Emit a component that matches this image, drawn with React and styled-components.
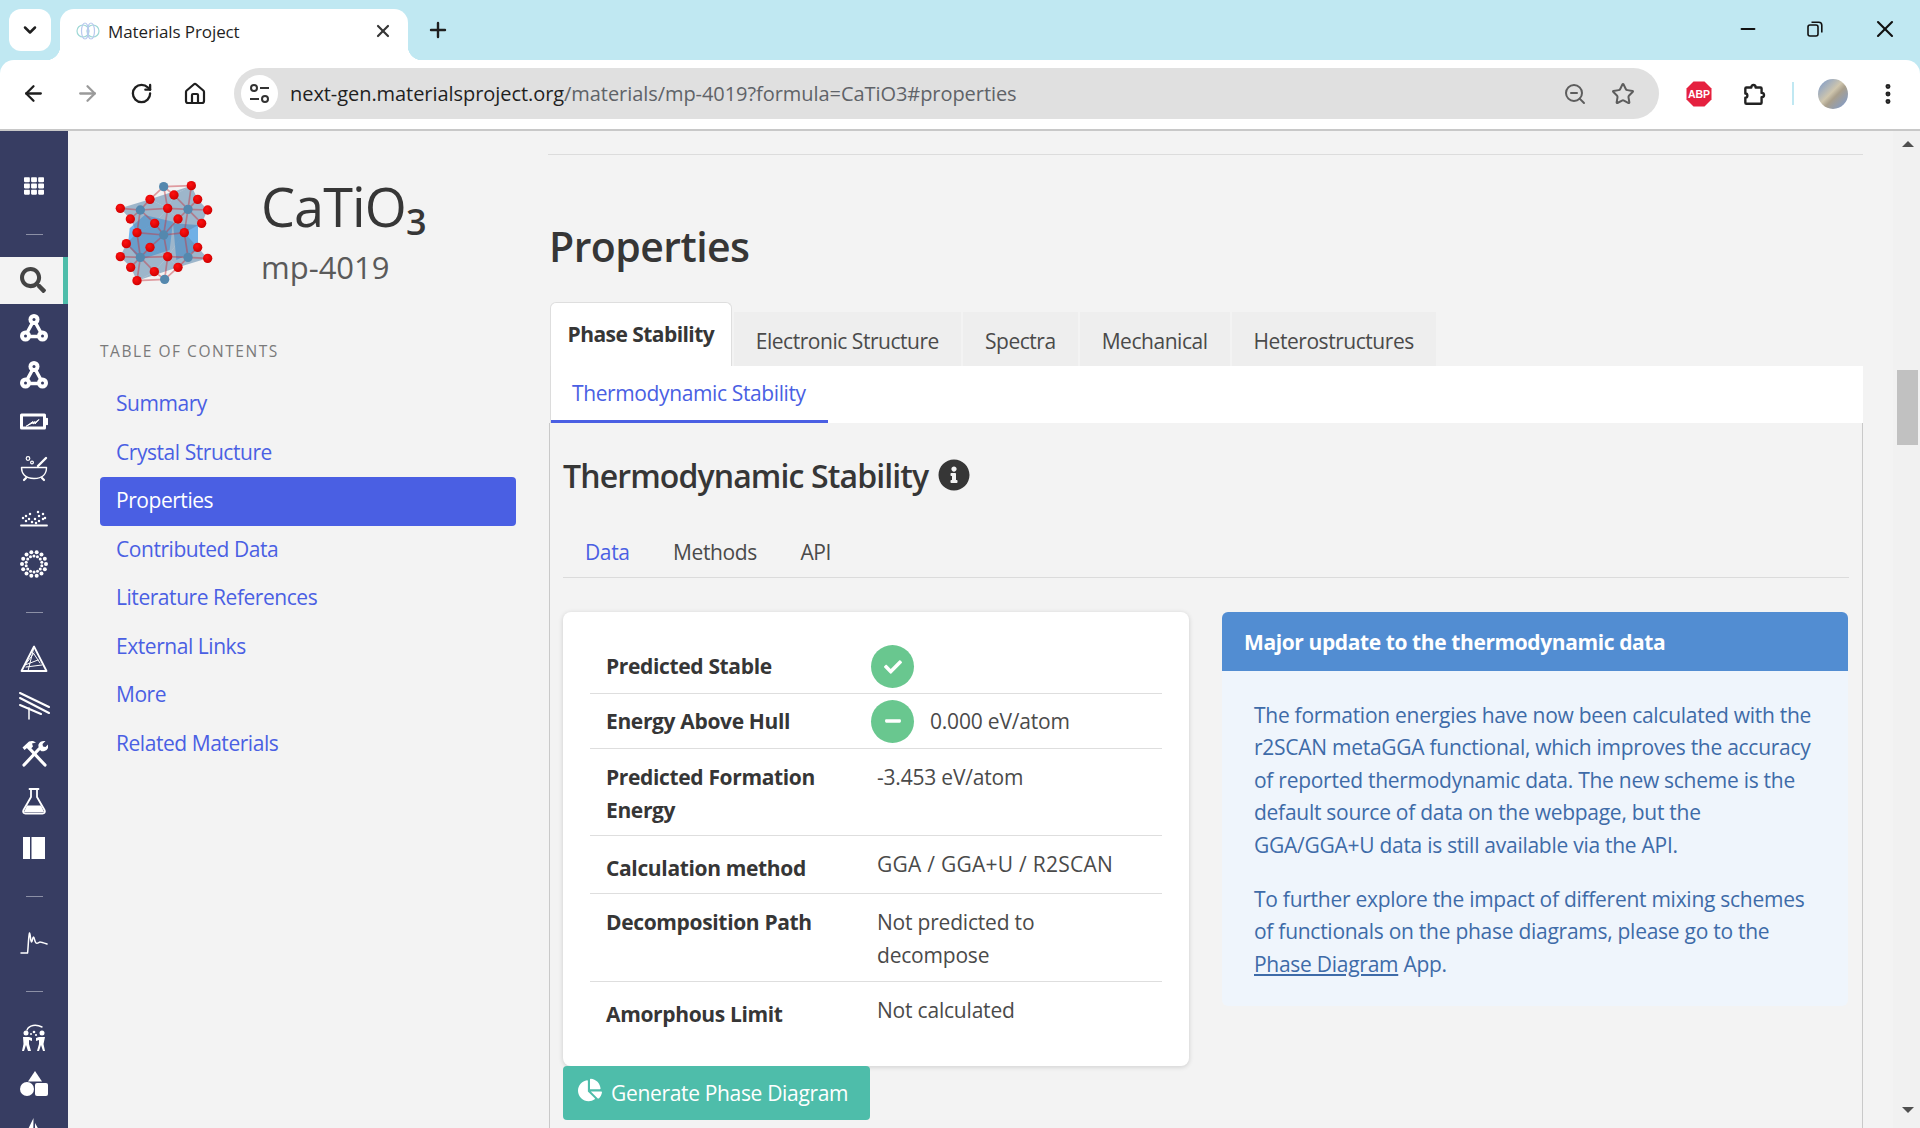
import React from 'react';
import styled, {createGlobalStyle} from 'styled-components';
import {ArrowLeft, ArrowRight, ChevronDown, EllipsisVertical, House, Minus, Plus, RotateCw, Star, X, ZoomOut} from 'lucide-react';
import {FaChartPie, FaCheck, FaInfoCircle, FaMinus, FaSearch, FaTh} from 'react-icons/fa';

const GlobalStyle = createGlobalStyle`
  html, body {
    margin: 0;
    height: 100%;
    overflow: hidden;
    background: #f3f3f3;
  }
  * {
    box-sizing: border-box;
  }
`;

const FONT = `'Open Sans', 'Noto Sans', sans-serif`;
const BLUE = '#4a5fe3';

const Page = styled.div`
  display: flex;
  flex-direction: column;
  width: 1920px;
  height: 1128px;
  overflow: hidden;
  font-family: ${FONT};
  color: #363636;
`;

/* browser chrome */
const Chrome = styled.header`
  flex-shrink: 0;
  background: #c0e8f2;
`;
const TabStrip = styled.div`
  display: flex;
  align-items: flex-start;
  height: 60px;
  padding: 9px 0 0 9px;
`;
const TabSearch = styled.div`
  display: flex;
  align-items: center;
  justify-content: center;
  width: 42px;
  height: 42px;
  margin-right: 9px;
  background: #fff;
  border-radius: 12px;
  color: #1f1f1f;
`;
const BrowserTab = styled.div`
  position: relative;
  display: flex;
  align-items: center;
  width: 348px;
  height: 51px;
  padding: 0 15px 7px 16px;
  background: #fff;
  border-radius: 14px 14px 0 0;

  &::before, &::after {
    content: '';
    position: absolute;
    bottom: 0;
    width: 14px;
    height: 14px;
  }
  &::before {
    left: -14px;
    background: radial-gradient(circle at 0 0, transparent 14px, #fff 14.5px);
  }
  &::after {
    right: -14px;
    background: radial-gradient(circle at 100% 0, transparent 14px, #fff 14.5px);
  }
`;
const TabTitle = styled.span`
  flex: 1;
  margin-left: 8px;
  font-size: 17px;
  letter-spacing: -.1px;
  color: #1f1f1f;
`;
const NewTab = styled.div`
  display: flex;
  align-items: center;
  justify-content: center;
  width: 30px;
  height: 42px;
  margin-left: 15px;
  color: #1f1f1f;
`;
const WindowControls = styled.div`
  display: flex;
  align-items: center;
  gap: 48px;
  height: 40px;
  margin-left: auto;
  padding-right: 21px;
  color: #111;
`;
const Toolbar = styled.div`
  display: flex;
  align-items: center;
  height: 71px;
  padding: 0 0 2px 20px;
  background: #fff;
  border-radius: 14px 14px 0 0;
  border-bottom: 2px solid #c8c8c8;
`;
const NavButton = styled.span`
  display: flex;
  justify-content: center;
  width: 26px;
  margin-right: 28px;
  color: ${props => props.$muted ? '#9a9a9a' : '#1f1f1f'};
`;
const AddressBar = styled.div`
  display: flex;
  align-items: center;
  flex-shrink: 0;
  width: 1425px;
  height: 51px;
  margin-left: -2px;
  padding: 0 24px 0 7px;
  background: #e0e0e0;
  border-radius: 26px;
  color: #5d5d5d;
`;
const SiteChip = styled.span`
  display: flex;
  align-items: center;
  justify-content: center;
  width: 37px;
  height: 37px;
  margin-right: 12px;
  background: #fff;
  border-radius: 50%;
  color: #333;
`;
const Url = styled.span`
  flex: 1;
  font-size: 20px;
  letter-spacing: -.06px;
  color: #5f6368;

  b {
    font-weight: 400;
    color: #1f1f1f;
  }
`;
const ToolIcons = styled.div`
  display: flex;
  align-items: center;
  margin-left: 27px;
`;
const ToolGap = styled.span`
  width: 29px;
`;
const AddressIcons = styled.div`
  display: flex;
  align-items: center;
  gap: 24px;
`;
const Divider = styled.span`
  width: 2px;
  height: 23px;
  margin: 0 24px 0 25px;
  background: #c0e8f2;
`;
const Avatar = styled.span`
  width: 30px;
  height: 30px;
  margin-right: 27px;
  border-radius: 50%;
  background: linear-gradient(135deg, #93a6c2 15%, #cfc6ae 45%, #a99f8c 58%, #8b9dbc 85%);
`;

/* page body */
const Body = styled.div`
  flex: 1;
  display: flex;
  min-height: 0;
`;
const SideNav = styled.nav`
  flex-shrink: 0;
  width: 68px;
  padding-top: 31px;
  background: #373d62;
  overflow: hidden;
  color: #fff;
`;
const NavItem = styled.div`
  display: flex;
  align-items: center;
  justify-content: center;
  height: 47.3px;
  padding-left: ${props => props.$active ? 3 : 0}px;
  background: ${props => props.$active ? '#f3f3f3' : 'transparent'};
  border-right: ${props => props.$active ? '5px solid #4ebdaa' : '0'};
  color: ${props => props.$active ? '#444' : '#fff'};
`;
const NavRule = styled.span`
  width: 17px;
  height: 1px;
  margin-top: 3px;
  background: #8c90a6;
`;

const Toc = styled.aside`
  flex-shrink: 0;
  width: 481px;
  padding: 49px 33px 0 32px;
`;
const MaterialHead = styled.div`
  display: flex;
  margin-left: 13px;
`;
const MaterialName = styled.div`
  margin: -9px 0 0 44px;
`;
const Formula = styled.h1`
  margin: 0;
  font-size: 54px;
  line-height: 70px;
  font-weight: 500;
  letter-spacing: -.9px;
  color: #363636;

  sub {
    font-size: 36px;
    font-weight: 600;
    line-height: 0;
    vertical-align: -8px;
  }
`;
const MaterialId = styled.div`
  margin-top: 4px;
  font-size: 31px;
  line-height: 44px;
  color: #5a5a5a;
`;
const TocLabel = styled.div`
  margin: 50px 0 17px;
  font-size: 15.5px;
  line-height: 24px;
  letter-spacing: 1.55px;
  color: #7a7a7a;
`;
const TocLink = styled.a`
  display: block;
  height: 48.5px;
  padding: 0 16px;
  border-radius: 4px;
  font-size: 21px;
  line-height: 46px;
  letter-spacing: -.45px;
  background: ${props => props.$active ? BLUE : 'transparent'};
  color: ${props => props.$active ? '#fff' : BLUE};
`;

const Main = styled.main`
  flex-shrink: 0;
  width: 1314px;
  padding-top: 23px;
`;
const TopRule = styled.hr`
  margin: 0 0 0 -1px;
  border: 0;
  border-top: 1px solid #dcdcdc;
`;
const Title = styled.h2`
  margin: 61px 0 26px;
  font-size: 41px;
  line-height: 60px;
  font-weight: 600;
  letter-spacing: -.55px;
  color: #363636;
`;
const Tabs = styled.div`
  display: flex;
  align-items: flex-end;
  gap: 2px;
  padding-left: 1px;
`;
const Tab = styled.div`
  height: ${props => props.$active ? 64 : 54}px;
  padding: 0 ${props => props.$active ? '16.5px' : '22px'};
  border: ${props => props.$active ? '1px solid #dedede' : '0'};
  border-bottom: 0;
  border-radius: ${props => props.$active ? '6px 6px 0 0' : '0'};
  background: ${props => props.$active ? '#fff' : '#eeeeee'};
  font-size: 21px;
  font-weight: ${props => props.$active ? 700 : 400};
  line-height: ${props => props.$active ? 62 : 58}px;
  letter-spacing: ${props => props.$active ? '-.55px' : '-.46px'};
  color: ${props => props.$active ? '#363636' : '#4a4a4a'};
`;
const SubTabs = styled.div`
  display: flex;
  height: 57px;
  margin-left: 1px;
  background: #fff;
  border-left: 1px solid #dcdcdc;
`;
const SubTab = styled.div`
  height: 57px;
  width: 277px;
  padding-left: 21px;
  border-bottom: 3px solid ${BLUE};
  font-size: 21px;
  line-height: 54px;
  letter-spacing: -.38px;
  color: ${BLUE};
`;
const Panel = styled.section`
  height: 800px;
  padding: 0 13px;
  border-left: 1px solid #c9c9c9;
  border-right: 1px solid #c9c9c9;
`;
const PanelHead = styled.h3`
  display: flex;
  align-items: center;
  margin: 0;
  height: 106px;
  padding-bottom: 2px;
  font-size: 32px;
  font-weight: 600;
  letter-spacing: -.88px;
  color: #363636;

  svg {
    margin-left: 10px;
    color: #363636;
  }
`;
const DataTabs = styled.div`
  display: flex;
  gap: 43.5px;
  height: 49px;
  padding-left: 22px;
  border-bottom: 1px solid #dbdbdb;
`;
const DataTab = styled.span`
  font-size: 21px;
  line-height: 46px;
  letter-spacing: -.38px;
  color: ${props => props.$active ? BLUE : '#4a4a4a'};
`;
const Columns = styled.div`
  display: grid;
  grid-template-columns: 626px 626px;
  gap: 33px;
  padding-top: 34px;
`;
const Card = styled.div`
  height: 454px;
  padding: 28px 27px 0;
  background: #fff;
  border-radius: 8px;
  box-shadow: 0 1px 5px rgba(10, 10, 10, .16);
`;
const Row = styled.div`
  display: flex;
  align-items: ${props => props.$middle ? 'center' : 'flex-start'};
  height: ${props => props.$height}px;
  padding: ${props => props.$middle ? '0' : '12px'} 17px 0 16px;
  border-bottom: ${props => props.$last ? '0' : '1px solid #dedede'};
`;
const Label = styled.div`
  flex-shrink: 0;
  width: 271px;
  padding-top: ${props => props.$low ? 4 : 0}px;
  padding-right: 40px;
  font-size: 21px;
  line-height: 32.5px;
  font-weight: 700;
  letter-spacing: -.35px;
  color: #363636;
`;
const Value = styled.div`
  display: flex;
  align-items: center;
  font-size: 21px;
  line-height: 32.5px;
  letter-spacing: ${props => props.$caps ? '.25px' : '-.2px'};
  color: #4a4a4a;
`;
const StatusDot = styled.span`
  display: flex;
  align-items: center;
  justify-content: center;
  width: 43px;
  height: 43px;
  margin: 0 16px 0 -6px;
  border-radius: 50%;
  background: #69c78f;
  color: #fff;
`;
const ActionButton = styled.button`
  display: flex;
  align-items: center;
  gap: 9px;
  width: 307px;
  height: 54px;
  padding: 0 0 0 15px;
  border: 0;
  border-radius: 4px;
  background: #4ebdaa;
  font-family: ${FONT};
  font-size: 21px;
  letter-spacing: -.33px;
  color: #fff;

  svg {
    margin-top: -6px;
  }
`;
const Notice = styled.div`
  align-self: start;
  border-radius: 6px;
  background: #eff5fc;
  overflow: hidden;
`;
const NoticeHead = styled.div`
  height: 59px;
  padding-left: 22px;
  background: #528dd2;
  font-size: 21px;
  font-weight: 700;
  line-height: 60px;
  letter-spacing: -.4px;
  color: #fff;
`;
const NoticeBody = styled.div`
  height: 335px;
  padding: 28px 34px 0 32px;
  font-size: 21px;
  line-height: 32.4px;
  letter-spacing: -.27px;
  color: #3e6ba8;

  p {
    margin: 0 0 22px;
  }
  a {
    color: inherit;
    text-decoration: underline;
  }
`;

const Scrollbar = styled.div`
  position: relative;
  flex-shrink: 0;
  width: 27px;
  margin-left: 30px;
  background: #f1f1f1;
`;
const ScrollThumb = styled.div`
  position: absolute;
  top: 239px;
  left: 4px;
  right: 2px;
  height: 75px;
  background: #c1c1c1;
`;
const ScrollArrow = styled.span`
  position: absolute;
  ${props => props.$down ? 'bottom: 15px;' : 'top: 10px;'}
  left: 9px;
  border-left: 6px solid transparent;
  border-right: 6px solid transparent;
  ${props => props.$down ? 'border-top: 6px solid #505050;' : 'border-bottom: 6px solid #505050;'}
`;

/* drawings */
const Favicon = () => (
  <svg width='24' height='24' viewBox='0 0 24 24' fill='none' strokeWidth='1.2'>
    <circle cx='7' cy='12' r='6' stroke='#9fd8d6' />
    <circle cx='17' cy='12' r='6' stroke='#9fd8d6' />
    <ellipse cx='9' cy='12' rx='3.5' ry='8' stroke='#b9c9ee' />
    <ellipse cx='15' cy='12' rx='3.5' ry='8' stroke='#b9c9ee' />
  </svg>
);
const Tune = () => (
  <svg width='21' height='21' viewBox='0 0 21 21' fill='none' stroke='currentColor' strokeWidth='2'>
    <circle cx='5' cy='5' r='3' />
    <path d='M11 5h9M1 16h9' />
    <circle cx='16' cy='16' r='3' />
  </svg>
);
const Restore = () => (
  <svg width='16' height='16' viewBox='0 0 16 16' fill='none' stroke='currentColor' strokeWidth='1.6'>
    <rect x='1' y='4' width='10' height='11' rx='2' />
    <path d='M4.5 1.2h7.3a3 3 0 0 1 3 3v7.3' />
  </svg>
);
const Abp = () => (
  <svg width='26' height='26' viewBox='0 0 26 26'>
    <path d='M7.500.5h11l7 7v11l-7 7h-11l-7-7v-11z' fill='#e5213f' />
    <text x='13' y='17' textAnchor='middle' fontFamily='Liberation Sans, sans-serif' fontSize='10.5' fontWeight='700' fill='#fff'>ABP</text>
  </svg>
);
const ExtensionPiece = () => (
  <svg width='26' height='26' viewBox='0 0 24 24' fill='none' stroke='#222' strokeWidth='2.200' strokeLinejoin='round'>
    <path d='M5 6h4.500c0-3 4-3 4 0H18a1 1 0 0 1 1 1v4c3 0 3 4 0 4v5a1 1 0 0 1-1 1H5a1 1 0 0 1-1-1v-4.500c2.500 0 2.500-4 0-4V7a1 1 0 0 1 1-1z' />
  </svg>
);

const Glyph = ({children, w = 28, h = 28}) => (
  <svg width={w} height={h} viewBox={`0 0 ${w} ${h}`} fill='none' stroke='#fff' strokeLinecap='round' strokeLinejoin='round'>
    {children}
  </svg>
);
const Atoms = () => (
  <Glyph>
    <path d='M14 6 5 22.500h18z' strokeWidth='3.400' />
    <g fill='#fff' stroke='none'>
      <circle cx='14' cy='5.500' r='5.500' />
      <circle cx='5.500' cy='22' r='5.500' />
      <circle cx='22.500' cy='22' r='5.500' />
    </g>
    <g fill='#373d62' stroke='none'>
      <circle cx='14' cy='5.500' r='1.500' />
      <circle cx='5.500' cy='22' r='1.500' />
      <circle cx='22.500' cy='22' r='1.500' />
    </g>
  </Glyph>
);
const Battery = () => (
  <Glyph>
    <rect x='1.500' y='7' width='23' height='13' strokeWidth='3' />
    <path d='M27 11v5' strokeWidth='2.400' />
    <path d='M6.500 18 13 13.500v2.500l6-4.500-4 4.500v-2z' fill='#fff' strokeWidth='1' />
  </Glyph>
);
const Mortar = () => (
  <Glyph>
    <path d='M1.500 12.500h25c0 6-3.500 11-12.500 11s-12.500-5-12.500-11z' strokeWidth='1.400' />
    <path d='M18 11 26 3' strokeWidth='2.400' />
    <circle cx='8' cy='3.500' r='1.800' strokeWidth='1.200' />
    <circle cx='12' cy='7.500' r='1.400' strokeWidth='1.200' />
    <path d='M4 25l2-2M24 25l-2-2' strokeWidth='2.200' />
  </Glyph>
);
const Deposit = () => (
  <Glyph>
    <path d='M1 22.500h26' strokeWidth='1.800' />
    <g fill='#fff' stroke='none'>
      {[[3, 15], [6, 13], [6, 18], [10, 11], [9, 16], [12, 19], [15, 16], [18, 9], [19, 13], [19, 18], [23, 11], [25, 15], [23, 16], [16, 20]].map(([x, y]) => (
        <circle key={x + '-' + y} cx={x} cy={y} r='1.250' />
      ))}
    </g>
  </Glyph>
);
const DotRing = () => {
  const dots = [];
  for (let i = 0; i < 14; i++) {
    const a = i * Math.PI / 7;
    dots.push(<circle key={'o' + i} cx={14 + 12 * Math.cos(a)} cy={14 + 12 * Math.sin(a)} r='2' />);
    dots.push(<circle key={'i' + i} cx={14 + 8 * Math.cos(a + .22)} cy={14 + 8 * Math.sin(a + .22)} r='1.500' />);
  }
  return <Glyph><g fill='#fff' stroke='none'>{dots}</g></Glyph>;
};
const Prism = () => (
  <Glyph>
    <path d='M14 1.500 1.500 26h25z' strokeWidth='1.800' />
    <path d='M14 2 8 26M14 8 5 20l13-5M6 22l16-2M14 9l6 9' strokeWidth='1' />
  </Glyph>
);
const Panels = () => (
  <Glyph w={31}>
    <path d='M1 1l29 14M1 6l29 15M1 13l21 9' strokeWidth='2' />
    <path d='M10 16v11' strokeWidth='1.500' />
  </Glyph>
);
const Tools = () => (
  <Glyph>
    <path d='M25 26 9 9' strokeWidth='3.200' />
    <path d='M2.500 8.500 9 2.500c3-1 5-.5 7 1l-4 1 1 3-3.500 3.500-2.500-2-2.500 2z' fill='#fff' stroke='none' />
    <path d='M4 26 19 10' strokeWidth='3.200' />
    <path d='M18.500 5.500c1-3 4-4 7-3.500l-3 3 .5 2.500 2.500.5 3-3c.5 3-1 6-4 7-1.500.5-3 .5-4-.5-1.500-1.500-2.500-4-2-6z' fill='#fff' stroke='none' />
  </Glyph>
);
const Flask = () => (
  <Glyph>
    <path d='M9.500 2h9M11 2v8L3.500 23c-1 2 0 3.500 2 3.500h17c2 0 3-1.500 2-3.500L17 10V2' strokeWidth='1.800' />
    <path d='M7 18.500h14l3 6.500H4z' fill='#fff' stroke='none' />
  </Glyph>
);
const Book = () => (
  <svg width='24' height='24' viewBox='0 0 24 24' fill='#fff'>
    <rect x='1' y='1' width='7' height='22' />
    <rect x='9.500' y='1' width='13.500' height='22' />
  </svg>
);
const Spectrum = () => (
  <Glyph>
    <path d='M1 25h6.500c.7-3 .8-16 2-20 1 .5 1 9 2 9s1-5 2-5 1 5 2.500 6 3-1 4-1 4 1 7 2' strokeWidth='1.500' />
  </Glyph>
);
const People = () => (
  <Glyph>
    <path d='M7 7c2-5 9-6 15-3' strokeWidth='1.400' />
    <g fill='#fff' stroke='none'>
      <circle cx='6' cy='10' r='2.500' />
      <circle cx='22' cy='10' r='2.500' />
      <path d='M3 14h6l3 1v3l-3-1v4l2 7H8l-2-6-2 6H2l1.500-7zM25 14h-6l-3 1v3l3-1v4l-2 7h2l2-6 2 6h2l-1.500-7z' />
      <circle cx='14' cy='9' r='1.300' />
      <circle cx='11' cy='11' r='1' />
      <circle cx='16' cy='12' r='1.100' />
    </g>
  </Glyph>
);
const Shapes = () => (
  <svg width='28' height='28' viewBox='0 0 28 28' fill='#fff'>
    <path d='M15 1l7 10.500H8z' />
    <circle cx='7' cy='19' r='7' />
    <rect x='15' y='13' width='13' height='13' rx='2' />
  </svg>
);
const Peak = () => (
  <svg width='28' height='28' viewBox='0 0 28 28' fill='#fff'>
    <path d='M13.500 0 0 28h13zM15 5l13 23H15z' />
  </svg>
);

const REDS = [[305, 107], [253, 135], [181, 148], [92, 175], [324, 148], [354, 180], [234, 175], [122, 207], [195, 220], [336, 220], [265, 207], [142, 248], [284, 248], [110, 281], [181, 292], [324, 292], [92, 320], [234, 320], [354, 325], [123, 352], [265, 352], [194, 365], [142, 392]];
const BLUES = [[222, 110], [152, 180], [295, 178], [222, 255], [152, 322], [295, 322], [225, 388]];
const neighbours = (bx, by) => REDS
  .filter(([rx, ry]) => Math.hypot(rx - bx, ry - by) < 88)
  .sort((a, b) => Math.atan2(a[1] - by, a[0] - bx) - Math.atan2(b[1] - by, b[0] - bx));
const Molecule = () => (
  <svg width='104' height='107' viewBox='70 90 312 321'>
    <defs>
      <radialGradient id='red' cx='.4' cy='.35' r='.7'>
        <stop offset='0' stopColor='#ff1010' />
        <stop offset='1' stopColor='#cc0000' />
      </radialGradient>
    </defs>
    <path d='M120 235 165 195 250 215 240 300 150 330 115 285z' fill='#6fb6f2' />
    <path d='M250 220 325 225 325 300 260 330z' fill='#6fb0e6' />
    {BLUES.map(([bx, by]) => (
      <polygon key={bx + '-' + by} points={neighbours(bx, by).map(p => p.join(',')).join(' ')} fill='#648db0' opacity='.6' />
    ))}
    <g stroke='#c8323c' strokeWidth='5' opacity='.45'>
      {BLUES.map(([bx, by]) => neighbours(bx, by).map(([rx, ry]) => (
        <line key={bx + '-' + by + '-' + rx + '-' + ry} x1={bx} y1={by} x2={rx} y2={ry} />
      )))}
    </g>
    {BLUES.map(([x, y]) => <circle key={x + '-' + y} cx={x} cy={y} r='14' fill='#5488ae' />)}
    {REDS.map(([x, y]) => <circle key={x + '-' + y} cx={x} cy={y} r='14' fill='url(#red)' />)}
  </svg>
);

const navItems = [
  <FaTh size={20} />, 'rule', <FaSearch size={26} />, <Atoms />, <Atoms />, <Battery />, <Mortar />, <Deposit />, <DotRing />, 'rule',
  <Prism />, <Panels />, <Tools />, <Flask />, <Book />, 'rule', <Spectrum />, 'rule', <People />, <Shapes />, <Peak />
];
const tocLinks = ['Summary', 'Crystal Structure', 'Properties', 'Contributed Data', 'Literature References', 'External Links', 'More', 'Related Materials'];
const tabs = ['Phase Stability', 'Electronic Structure', 'Spectra', 'Mechanical', 'Heterostructures'];

const App = () => (
  <Page>
    <GlobalStyle />
    <Chrome>
      <TabStrip>
        <TabSearch><ChevronDown size={20} strokeWidth={3} /></TabSearch>
        <BrowserTab>
          <Favicon />
          <TabTitle>Materials Project</TabTitle>
          <X size={20} strokeWidth={2.6} />
        </BrowserTab>
        <NewTab><Plus size={24} strokeWidth={2.4} /></NewTab>
        <WindowControls>
          <Minus size={22} strokeWidth={2.2} />
          <Restore />
          <X size={28} strokeWidth={1.8} />
        </WindowControls>
      </TabStrip>
      <Toolbar>
        <NavButton><ArrowLeft size={25} strokeWidth={2.2} /></NavButton>
        <NavButton $muted><ArrowRight size={25} strokeWidth={2.2} /></NavButton>
        <NavButton><RotateCw size={23} strokeWidth={2.4} /></NavButton>
        <NavButton><House size={24} strokeWidth={2.2} /></NavButton>
        <AddressBar>
          <SiteChip><Tune /></SiteChip>
          <Url><b>next-gen.materialsproject.org</b>/materials/mp-4019?formula=CaTiO3#properties</Url>
          <AddressIcons>
            <ZoomOut size={24} strokeWidth={2} />
            <Star size={24} strokeWidth={2} />
          </AddressIcons>
        </AddressBar>
        <ToolIcons>
          <Abp />
          <ToolGap />
          <ExtensionPiece />
          <Divider />
          <Avatar />
          <EllipsisVertical size={26} strokeWidth={2.6} color='#222' />
        </ToolIcons>
      </Toolbar>
    </Chrome>

    <Body>
      <SideNav>
        {navItems.map((item, i) => (
          <NavItem key={i} $active={i === 2}>
            {item === 'rule' ? <NavRule /> : item}
          </NavItem>
        ))}
      </SideNav>

      <Toc>
        <MaterialHead>
          <Molecule />
          <MaterialName>
            <Formula>CaTiO<sub>3</sub></Formula>
            <MaterialId>mp-4019</MaterialId>
          </MaterialName>
        </MaterialHead>
        <TocLabel>TABLE OF CONTENTS</TocLabel>
        {tocLinks.map(link => (
          <TocLink key={link} $active={link === 'Properties'}>{link}</TocLink>
        ))}
      </Toc>

      <Main>
        <TopRule />
        <Title>Properties</Title>
        <Tabs>
          {tabs.map((tab, i) => <Tab key={tab} $active={i === 0}>{tab}</Tab>)}
        </Tabs>
        <SubTabs><SubTab>Thermodynamic Stability</SubTab></SubTabs>
        <Panel>
          <PanelHead>Thermodynamic Stability <FaInfoCircle size={32} /></PanelHead>
          <DataTabs>
            <DataTab $active>Data</DataTab>
            <DataTab>Methods</DataTab>
            <DataTab>API</DataTab>
          </DataTabs>
          <Columns>
            <div>
              <Card>
                <Row $height={54} $middle>
                  <Label>Predicted Stable</Label>
                  <Value><StatusDot><FaCheck size={18} /></StatusDot></Value>
                </Row>
                <Row $height={55} $middle>
                  <Label>Energy Above Hull</Label>
                  <Value><StatusDot><FaMinus size={18} /></StatusDot>0.000 eV/atom</Value>
                </Row>
                <Row $height={87}>
                  <Label>Predicted Formation Energy</Label>
                  <Value>-3.453 eV/atom</Value>
                </Row>
                <Row $height={58}>
                  <Label $low>Calculation method</Label>
                  <Value $caps>GGA / GGA+U / R2SCAN</Value>
                </Row>
                <Row $height={88}>
                  <Label>Decomposition Path</Label>
                  <Value>Not predicted to<br />decompose</Value>
                </Row>
                <Row $height={57} $last>
                  <Label $low>Amorphous Limit</Label>
                  <Value>Not calculated</Value>
                </Row>
              </Card>
              <ActionButton><FaChartPie size={24} />Generate Phase Diagram</ActionButton>
            </div>
            <Notice>
              <NoticeHead>Major update to the thermodynamic data</NoticeHead>
              <NoticeBody>
                <p>The formation energies have now been calculated with the r2SCAN metaGGA functional, which improves the accuracy of reported thermodynamic data. The new scheme is the default source of data on the webpage, but the GGA/GGA+U data is still available via the API.</p>
                <p>To further explore the impact of different mixing schemes of functionals on the phase diagrams, please go to the <a>Phase Diagram</a> App.</p>
              </NoticeBody>
            </Notice>
          </Columns>
        </Panel>
      </Main>

      <Scrollbar>
        <ScrollArrow />
        <ScrollThumb />
        <ScrollArrow $down />
      </Scrollbar>
    </Body>
  </Page>
);

export default App;
